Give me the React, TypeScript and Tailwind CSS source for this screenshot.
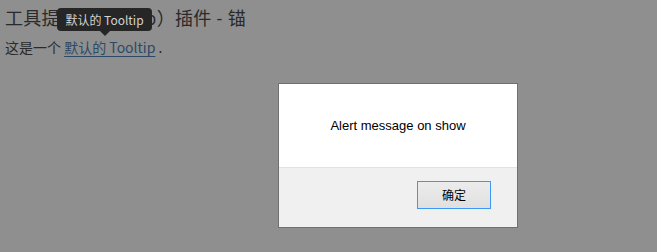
export default function App() {
  return (
    <div className="relative h-[252px] w-[657px] overflow-hidden bg-[#8f8f90] font-['Noto_Sans_CJK_SC','Noto_Sans',sans-serif] text-[#2a2a2a]">
      <div className="px-[5px] pt-[6px]">
        <h1 className="font-['Open_Sans','Noto_Sans_CJK_SC',sans-serif] text-[18px] leading-[24px] tracking-[0.3px]">
          工具提示（Tooltip）插件 - 锚
        </h1>
        <p className="mt-[7px] text-[14px] leading-[20px]">
          这是一个{' '}
          <a href="#" className="text-[#2c4966] underline underline-offset-[3px]">
            默认的 Tooltip
          </a>{' '}
          .
        </p>
      </div>

      {/* tooltip bubble, shown above the link */}
      <div className="absolute left-[57px] top-[8px] flex flex-col items-center">
        <div className="flex h-[23px] w-[95px] items-center justify-center rounded-[4px] bg-[#262626] text-[12px] text-[#d2d2d2]">
          默认的 Tooltip
        </div>
        <span
          aria-hidden
          className="h-0 w-0 border-x-[5px] border-t-[5px] border-x-transparent border-t-[#262626]"
        />
      </div>

      {/* alert dialog */}
      <div className="absolute left-[278px] top-[83px] flex h-[145px] w-[240px] flex-col border border-[#707070] bg-white">
        <div className="flex h-[83px] items-center justify-center font-['Liberation_Sans',sans-serif] text-[13px] text-black">
          Alert message on show
        </div>
        <div className="flex flex-1 items-start justify-end border-t border-[#e2e2e2] bg-[#f0f0f0] pr-[26px] pt-[13px]">
          <button
            type="button"
            className="flex h-[28px] w-[74px] items-center justify-center border border-[#3d97f5] bg-gradient-to-b from-[#ececec] to-[#e0e0e0] text-[12px] text-black"
          >
            确定
          </button>
        </div>
      </div>
    </div>
  );
}
